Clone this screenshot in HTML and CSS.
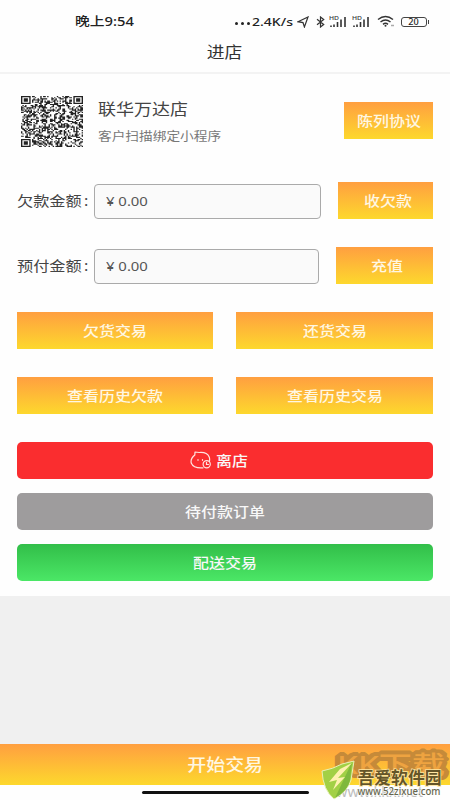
FILE: index.html
```html
<!DOCTYPE html>
<html lang="zh-CN">
<head>
<meta charset="utf-8">
<title>进店</title>
<link rel="stylesheet" href="styles.css">
</head>
<body>
<div class="app">
  <div class="status">
    <span class="time"><span class="wide left">晚上9:54</span></span>
    <div class="status-right">
      <span class="dots"><i></i><i></i><i></i></span>
      <span class="speed"><span class="wide left">2.4K/s</span></span>
      <svg class="nav-icon" viewBox="0 0 12 12"><path d="M1 5.7 11 1 7.4 11 6 6.6Z"/></svg>
      <svg class="bt-icon" viewBox="0 0 9 12"><path d="M1 3.3 7.7 8.5 4.5 11V1L7.7 3.5 1 8.7"/></svg>
      <svg class="signal" viewBox="0 0 19 14"><text x="0" y="5" textLength="10" lengthAdjust="spacingAndGlyphs">HD</text><path d="M2 12v-1.5M5 12V9.5M8.5 12V7M12 12V4.5M16 12V2"/></svg>
      <svg class="signal second" viewBox="0 0 19 14"><text x="0" y="5" textLength="10" lengthAdjust="spacingAndGlyphs">HD</text><path d="M2 12v-1.5M5 12V9.5M8.5 12V7M12 12V4.5M16 12V2"/></svg>
      <svg class="wifi" viewBox="0 0 18 13"><path d="M1 4.5Q8.5-1.5 16 4.5M3.5 7Q8.5 3 13.5 7M6 9.3Q8.5 7.4 11 9.3"/><circle cx="8.5" cy="10.8" r="1"/><path class="faint" d="M14 10.5h3"/></svg>
      <div class="battery"><span class="wide">20</span></div>
    </div>
  </div>
  <header class="title"><span class="wide">进店</span></header>
  <main class="content">
    <section class="shop">
      <svg class="qr" id="qr" viewBox="0 0 45 45" preserveAspectRatio="none"></svg>
      <div class="shop-info">
        <div class="name"><span class="wide left">联华万达店</span></div>
        <div class="hint"><span class="wide left">客户扫描绑定小程序</span></div>
      </div>
      <button class="btn agreement"><span class="wide">陈列协议</span></button>
    </section>
    <section class="amount">
      <label><span class="wide left">欠款金额<span class="colon">:</span></span></label>
      <div class="field"><span class="wide left">¥ 0.00</span></div>
      <button class="btn collect"><span class="wide">收欠款</span></button>
    </section>
    <section class="amount">
      <label><span class="wide left">预付金额<span class="colon">:</span></span></label>
      <div class="field"><span class="wide left">¥ 0.00</span></div>
      <button class="btn recharge"><span class="wide">充值</span></button>
    </section>
    <section class="grid">
      <button class="btn"><span class="wide">欠货交易</span></button>
      <button class="btn"><span class="wide">还货交易</span></button>
      <button class="btn"><span class="wide">查看历史欠款</span></button>
      <button class="btn"><span class="wide">查看历史交易</span></button>
    </section>
    <section class="stack">
      <button class="btn leave">
        <svg class="face" viewBox="0 0 22 18"><path d="M5 1 9.2 1.5Q17 .8 19.2 6 20 8 19.4 10.5M5 1 4.8 4Q.3 7.5 1.2 12 3.5 17.5 13 16.8"/><path d="M8 8.5v.8M12.5 8.5v.8"/><circle cx="16.7" cy="13.3" r="3.6"/><path d="M16.5 11.3v2.2H18.5"/></svg>
        <span class="wide">离店</span>
      </button>
      <button class="btn pending"><span class="wide">待付款订单</span></button>
      <button class="btn deliver"><span class="wide">配送交易</span></button>
    </section>
  </main>
  <div class="spacer"></div>
  <button class="btn start"><span class="wide">开始交易</span></button>
  <div class="home"><i></i></div>
  <svg class="mark" viewBox="0 0 130 60">
    <text class="kk" x="17" y="34" textLength="108" lengthAdjust="spacingAndGlyphs">KK下载</text>
    <text class="kkurl" x="16" y="57" textLength="87" lengthAdjust="spacingAndGlyphs">www.kkx.net</text>
    <path class="shield" d="M2 31Q13 29 22 24L34 21 31 40Q28 51 14 59 3 50 2 31Z"/>
    <path class="shade" d="M15 58 32 22 30 40Q28 51 15 58Z"/>
    <path class="bolt" d="M20 29 9 42 17 40 13 50 25 37 18 38 32 23 24 27Z"/>
    <text class="brand" x="37.5" y="44" textLength="84" lengthAdjust="spacingAndGlyphs">吾爱软件园</text>
    <text class="url" x="37.5" y="54.5" textLength="83" lengthAdjust="spacingAndGlyphs">www.52zixue.com</text>
  </svg>
</div>
<script src="qr.js"></script>
</body>
</html>
```
FILE: styles.css
```css
* { box-sizing: border-box; }
body { margin: 0; font-family: "Noto Sans", "Noto Sans CJK SC", sans-serif; color: #444; }
.app { position: relative; width: 450px; height: 800px; display: flex; flex-direction: column; background: #fefefe; overflow: hidden; }
.wide { display: inline-block; transform: scaleX(1.14); white-space: nowrap; }
.left { transform-origin: left center; }

.status { height: 37px; padding: 6px 22px 0 75px; display: flex; align-items: center; justify-content: space-between; font-size: 12.2px; font-weight: 500; line-height: 16px; color: #222; }
.time .wide { transform: scaleX(1.21); }
.status-right { display: flex; align-items: center; width: 193px; }
.dots { display: flex; gap: 3px; width: 17px; padding-top: 4px; }
.dots i { width: 3px; height: 3px; border-radius: 50%; background: #222; }
.speed { width: 45px; font-size: 11.5px; }
.speed .wide { transform: scaleX(1.22); }
.status svg { fill: none; stroke: #333; stroke-width: 1.2; flex: none; }
.nav-icon { width: 12px; height: 12px; }
.bt-icon { width: 9px; height: 12px; margin-left: 7px; }
.signal { width: 19px; height: 14px; margin-left: 4px; }
.signal.second { margin-left: 4px; }
.signal path { stroke-width: 1.6; }
.status .signal text { fill: #333; stroke: none; font-size: 5px; }
.wifi { width: 18px; height: 13px; margin-left: 6px; }
.status .wifi path { stroke-width: 1.5; }
.wifi circle { fill: #333; stroke: none; }
.status .wifi .faint { stroke: #aaa; }
.battery { position: relative; flex: none; width: 26px; height: 10px; margin-left: 6px; border: 1.3px solid #444; border-radius: 3px; font-size: 8px; line-height: 8px; text-align: center; }
.battery::after { content: ""; position: absolute; right: -3px; top: 2px; width: 1px; height: 4px; background: #444; }

.title { height: 37px; border-bottom: 2px solid #f3f3f3; text-align: center; font-size: 15.6px; line-height: 30px; color: #333; }
.content { height: 522px; padding: 21px 17px 0; }
.btn { border: 0; padding: 0 0 2px; height: 37px; display: flex; align-items: center; justify-content: center; font-family: inherit; font-size: 14px; font-weight: 500; color: #fff7e2; background: linear-gradient(#ff9f40, #fdd82d); }
.shop { display: flex; height: 87px; }
.qr { width: 62px; height: 51px; margin: 1px 0 0 4px; fill: #222; }
.shop-info { flex: 1; padding: 1px 0 0 15px; }
.name { font-size: 15.8px; line-height: 27px; color: #444; }
.hint { font-size: 12px; line-height: 28px; color: #777; }
.agreement { width: 89px; margin-top: 7px; }
.amount { display: flex; align-items: center; justify-content: space-between; height: 37px; margin-bottom: 28px; }
.amount label { width: 77px; padding-bottom: 1px; font-size: 14.2px; color: #444; }
.colon { margin-left: 2px; }
.field { flex: 1; height: 35px; margin: 2px 17px 0 0; padding-left: 11px; border: 1.5px solid #aaa; border-radius: 4px; background: #fafafa; font-size: 12.2px; line-height: 34px; color: #555; }
.field .wide { transform: scaleX(1.22); }
.collect { width: 95px; padding-left: 5px; }
.recharge { width: 97px; padding-left: 5px; }
.grid { display: grid; grid-template-columns: 196px 197px; justify-content: space-between; row-gap: 28px; }
.stack { display: flex; flex-direction: column; gap: 14px; margin-top: 28px; }
.stack .btn { border-radius: 5px; color: #f8f8f8; }
.stack .leave { background: #fa2d2f; gap: 6px; padding-right: 15px; }
.face { width: 22px; height: 18px; fill: none; stroke: #ffe3df; stroke-width: 1.2; stroke-linecap: round; }
.stack .pending { background: #9e9c9d; }
.stack .deliver { background: linear-gradient(#32be49, #4be766); }
.spacer { height: 148px; background: #f0f0f0; }
.start { height: 41px; width: 100%; font-size: 16.6px; }
.home { flex: 1; display: flex; justify-content: center; padding-top: 6px; }
.home i { width: 167px; height: 3px; border-radius: 2px; background: #111; }

.mark { position: absolute; left: 320px; top: 740px; width: 130px; height: 60px; }
.mark text { font-family: "Noto Sans", "Noto Sans CJK SC", sans-serif; }
.mark .kk { font-size: 25px; font-weight: 500; fill: #eea340; stroke: #c68a39; stroke-width: 8; stroke-linejoin: bevel; paint-order: stroke; }
.kkurl { font-size: 14px; fill: #bdbdbd; }
.shield { fill: #a2d045; stroke: #e7f1b7; stroke-width: 1; }
.shade { fill: #7fb83c; }
.bolt { fill: #fff2b0; }
.brand { font-size: 17px; font-weight: 700; fill: #645528; stroke: #ffe6a0; stroke-width: 1.6; paint-order: stroke; }
.url { font-size: 10px; font-weight: 500; fill: #66664e; stroke: #fff; stroke-width: 1.2; paint-order: stroke; }
```
FILE: qr.js
```javascript
const size = 45;
let seed = 20117;
const random = () => (seed = (seed * 16807) % 2147483647) / 2147483647;
const finder = (x, y) => {
  for (const [ox, oy] of [[0, 0], [size - 7, 0], [0, size - 7]]) {
    const dx = x - ox, dy = y - oy;
    if (dx >= -1 && dx <= 7 && dy >= -1 && dy <= 7) {
      const r = Math.max(Math.abs(dx - 3), Math.abs(dy - 3));
      return r === 3 || r <= 1;
    }
  }
  return null;
};
let d = "";
for (let y = 0; y < size; y++) {
  for (let x = 0; x < size; x++) {
    const f = finder(x, y);
    if (f === null ? random() < 0.47 : f) d += `M${x} ${y}h1v1h-1z`;
  }
}
const path = document.createElementNS("http://www.w3.org/2000/svg", "path");
path.setAttribute("d", d);
document.getElementById("qr").appendChild(path);
```
